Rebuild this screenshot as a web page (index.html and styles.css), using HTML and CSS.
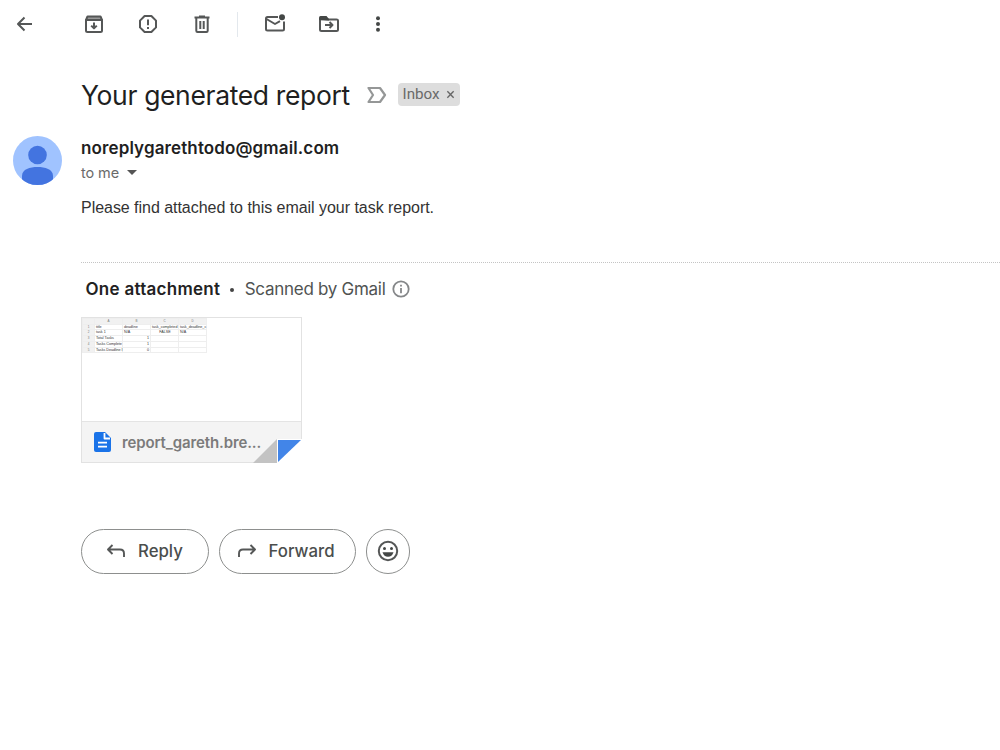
FILE: index.html
```html
<!DOCTYPE html>
<html lang="en">
<head>
<meta charset="utf-8">
<title>Your generated report</title>
<link rel="stylesheet" href="styles.css">
</head>
<body>
<header class="toolbar">
  <svg class="icon back" viewBox="0 0 24 24"><path d="M19 12H5.500M11.500 5.500L5 12L11.500 18.500"/></svg>
  <svg class="icon archive" viewBox="0 0 24 24"><path d="M4 8V18.500Q4 20 5.500 20H18.500Q20 20 20 18.500V8Z"/><path class="tint" d="M4 8L5.500 4.500H18.500L20 8Z"/><path d="M12 10.500V16M9.200 13.600L12 16.400L14.800 13.600"/></svg>
  <svg class="icon" viewBox="0 0 24 24"><path d="M8.600 4H15.400L20 8.600V15.400L15.400 20H8.600L4 15.400V8.600Z"/><path d="M12 7.500V13.200M12 15V17"/></svg>
  <svg class="icon" viewBox="0 0 24 24"><path d="M4.500 5.500H19.500M9 4.500H15M6.300 6V18.800Q6.300 20 7.500 20H16.500Q17.700 20 17.700 18.800V6M10.300 9V17M13.700 9V17"/></svg>
  <span class="separator"></span>
  <svg class="icon" viewBox="0 0 24 24"><path d="M15 5H4.500Q3 5 3 6.500V17Q3 18.500 4.500 18.500H19.500Q21 18.500 21 17V9.500M3.500 7L12 12L17 9.200"/><circle class="solid" cx="19" cy="5.200" r="3"/></svg>
  <svg class="icon folder" viewBox="0 0 24 24"><path d="M3 7V17.500Q3 19 4.500 19H19.500Q21 19 21 17.500V8.500Q21 7.500 19.500 7.500H11Z"/><path class="solid" d="M2 8V5.500Q2 4 3.500 4H9.500L12 7V8.500Z"/><path d="M8 13H15M12.500 10L15.500 13L12.500 16"/></svg>
  <svg class="icon more" viewBox="0 0 24 24"><g class="solid"><circle cx="12" cy="6.200" r="2"/><circle cx="12" cy="12" r="2"/><circle cx="12" cy="17.800" r="2"/></g></svg>
</header>
<main>
  <div class="subject">
    <h1>Your generated report</h1>
    <svg class="marker" viewBox="0 0 20 18"><path d="M1.500 2H13L18 9L13 16H1.500L6 9Z"/></svg>
    <span class="label">Inbox <svg class="close" viewBox="0 0 10 10"><path d="M1.500 1.500L8.500 8.500M8.500 1.500L1.500 8.500"/></svg></span>
  </div>
  <section class="message">
    <svg class="avatar" viewBox="0 0 49 49"><defs><clipPath id="face"><circle cx="24.500" cy="24.500" r="24.500"/></clipPath></defs><g clip-path="url(#face)"><rect class="light" width="49" height="49"/><circle class="blue" cx="24.500" cy="19" r="9.300"/><path class="blue" d="M9 49V40C9 33 17 31 24.500 31S40 33 40 40V49Z"/></g></svg>
    <div class="content">
      <div class="sender">noreplygarethtodo@gmail.com</div>
      <div class="recipient"><span>to me</span><i class="caret"></i></div>
      <p class="body">Please find attached to this email your task report.</p>
      <div class="attachments">
        <div class="scan"><b>One attachment</b><i class="dot"></i><span>Scanned by Gmail</span><svg class="info" viewBox="0 0 18 18"><circle cx="9" cy="9" r="7.700"/><path d="M9 8V13.200M9 4.700V6.600"/></svg></div>
        <div class="card">
          <div class="preview">
            <table class="sheet">
              <colgroup><col class="n"><col class="a"><col class="b"><col class="c"><col class="d"></colgroup>
              <tr><th></th><th>A</th><th>B</th><th>C</th><th>D</th></tr>
              <tr><th>1</th><td>title</td><td>deadline</td><td>task_completed</td><td>task_deadline_c</td></tr>
              <tr><th>2</th><td>task 1</td><td>N/A</td><td class="mid">FALSE</td><td>N/A</td></tr>
              <tr><th>3</th><td>Total Tasks</td><td class="num">1</td><td></td><td></td></tr>
              <tr><th>4</th><td>Tasks Complete</td><td class="num">1</td><td></td><td></td></tr>
              <tr><th>5</th><td>Tasks Deadline I</td><td class="num">0</td><td></td><td></td></tr>
            </table>
          </div>
          <div class="file"><svg class="doc" viewBox="0 0 17 20"><path class="page" d="M2 0H11L17 6V18Q17 20 15 20H2Q0 20 0 18V2Q0 0 2 0Z"/><path class="lines" d="M10.500 1V6.500H16M4 10.700H13M4 14.700H13"/></svg><span class="name">report_gareth.bre...</span></div>
          <svg class="fold" viewBox="0 0 49 25"><path class="backing" d="M24 0H49V25H24Z"/><path class="shade" d="M0 24L24 0V24Z"/><path class="corner" d="M25 1H48L25 23Z"/></svg>
        </div>
      </div>
      <div class="actions">
        <button class="pill reply"><svg viewBox="0 0 20 16"><path d="M6.500 2L2 6.500L6.500 11M2.500 6.500H14Q18 6.500 18 10.500V14"/></svg><span>Reply</span></button>
        <button class="pill forward"><svg viewBox="0 0 20 16"><path d="M13.500 2L18 6.500L13.500 11M17.500 6.500H6Q2 6.500 2 10.500V14"/></svg><span>Forward</span></button>
        <button class="pill smile" aria-label="Add reaction"><svg viewBox="0 0 22 22"><circle cx="11" cy="11" r="9.200"/><circle class="solid" cx="7.500" cy="8.500" r="1.500"/><circle class="solid" cx="14.500" cy="8.500" r="1.500"/><path class="solid" d="M5.500 12.300H16.500Q15 16.800 11 16.800T5.500 12.300Z"/></svg></button>
      </div>
    </div>
  </section>
</main>
</body>
</html>
```
FILE: styles.css
```css
* { box-sizing: border-box; }
body { margin: 0; background: #fff; color: #1f1f1f; font-family: Inter, "Liberation Sans", sans-serif; overflow: hidden; }
svg { display: block; flex: none; fill: none; stroke-linejoin: round; }
.toolbar { display: flex; align-items: center; height: 48px; padding-left: 13px; }
.icon { width: 24px; height: 24px; margin-right: 30px; stroke: #555757; stroke-width: 2; }
.icon.back { margin-right: 44.500px; }
.icon .tint { fill: #999; }
.icon .solid, .smile .solid { fill: #444746; stroke: none; }
.separator { width: 1px; height: 25px; background: #e3e8ed; margin: 0 25px 0 -6.500px; }
.icon.folder { margin-right: 25px; }
.subject { display: flex; align-items: center; height: 46px; margin: 23.500px 0 0 81px; }
h1 { margin: 0; width: 285.500px; font-size: 26.500px; font-weight: 400; line-height: 36px; letter-spacing: -.36px; white-space: nowrap; }
.marker { width: 20px; height: 18px; stroke: #959797; stroke-width: 2.200; }
.label { display: flex; align-items: center; justify-content: space-between; width: 62px; height: 23px; margin-left: 11.500px; padding: 0 5.500px 1px 4.500px; border-radius: 4px; background: #ddd; color: #6a6a6a; font: 15.200px Roboto, sans-serif; }
.close { width: 9px; height: 9px; margin-top: 1px; stroke: #666; stroke-width: 1.500; }
.message { display: flex; margin: 18.500px 0 0 12.500px; }
.avatar { width: 49px; height: 49px; margin-right: 19.500px; }
.avatar .light { fill: #a0c3ff; }
.avatar .blue { fill: #4374e0; }
.content { flex: 1; min-width: 0; }
.sender { height: 24px; line-height: 24px; font-size: 17px; font-weight: 600; letter-spacing: .12px; white-space: nowrap; }
.recipient { display: flex; align-items: center; height: 25px; color: #6a6a6a; font-size: 14.500px; letter-spacing: -.1px; }
.caret { margin-left: 8px; border: 5px solid transparent; border-top-color: #555; border-bottom: 0; }
.body { margin: 12px 0 0; height: 65px; line-height: 21px; font-family: "Liberation Sans", Arial, sans-serif; font-size: 16px; letter-spacing: -.035px; color: #333; }
.attachments { border-top: 1px dotted #c4c4c4; }
.scan { display: flex; align-items: center; height: 54px; padding: 0 0 2px 4.500px; font-size: 17px; color: #505352; white-space: nowrap; }
.scan b { color: #222; font-weight: 600; letter-spacing: .27px; }
.scan span { letter-spacing: -.28px; }
.dot { width: 4px; height: 4px; border-radius: 50%; background: #444; margin: 1px 10.500px 0 10px; }
.info { width: 18px; height: 18px; margin-left: 6px; stroke: #858789; stroke-width: 1.800; }
.card { position: relative; width: 221px; height: 146px; border: 1px solid #e2e2e2; background: #f4f4f4; }
.preview { height: 104px; background: #fff; border-bottom: 1px solid #e4e4e4; }
.sheet { width: 124px; table-layout: fixed; border-collapse: collapse; font: 3.700px/4.700px "Liberation Sans", sans-serif; color: #333; }
.sheet .n { width: 12px; } .sheet .a { width: 28px; } .sheet .b { width: 28px; } .sheet .c { width: 28px; } .sheet .d { width: 28px; }
.sheet th, .sheet td { height: 5.700px; padding: 0 0 0 1px; white-space: nowrap; border: 1px solid #eee; text-align: left; }
.sheet td { letter-spacing: -.03px; }
.sheet th { background: #f1f1f1; padding: 0; text-align: center; font-size: 3px; font-weight: 400; color: #777; }
.sheet .num { text-align: right; padding-right: 1px; } .sheet .mid { text-align: center; }
.file { display: flex; align-items: center; height: 40px; padding-left: 12px; }
.doc { width: 17px; height: 20px; }
.doc .page { fill: #1a73e8; }
.doc .lines { stroke: #fff; stroke-width: 1.800; }
.name { margin-left: 11px; color: #7b7b7b; font-size: 15px; font-weight: 600; letter-spacing: -.12px; white-space: nowrap; }
.fold { position: absolute; right: -1px; bottom: -2px; width: 49px; height: 25px; }
.backing { fill: #fff; } .shade { fill: #c3c3c3; } .corner { fill: #4285e8; }
.actions { display: flex; gap: 9.500px; margin-top: 66px; }
.pill { display: flex; align-items: center; height: 45px; padding: 0 0 1px 24px; border: 1px solid #8d8f8e; border-radius: 23px; background: #fff; color: #4b4e4d; font: 500 16.800px Inter, sans-serif; white-space: nowrap; }
.pill svg { width: 20px; height: 16px; stroke: #555757; stroke-width: 1.900; }
.pill span { margin-left: 12px; }
.reply { width: 128px; } .forward { width: 137.500px; padding-left: 17px; }
.smile { width: 44.500px; padding: 0 0 1px; justify-content: center; }
.smile svg { width: 22px; height: 22px; stroke-width: 2; }
```
